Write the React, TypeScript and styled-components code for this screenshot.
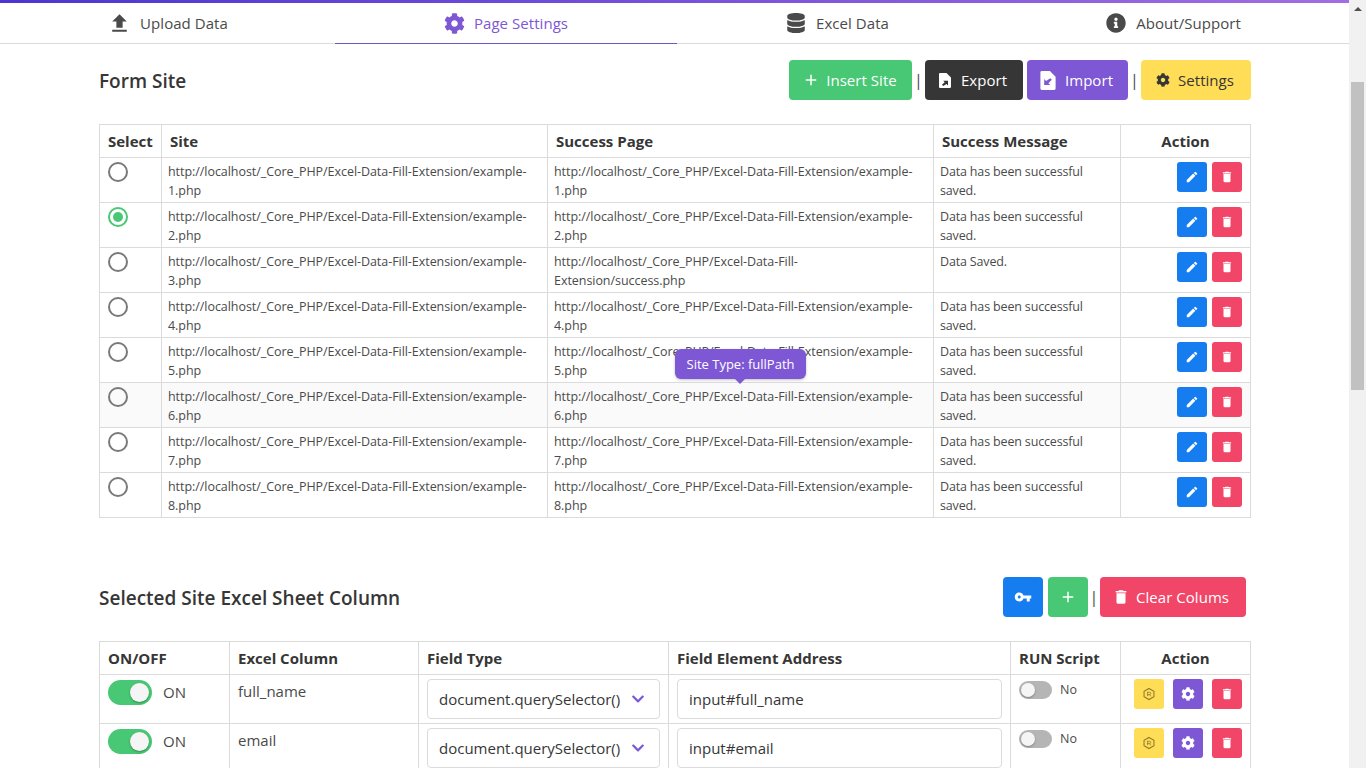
import React from "react";
import styled, { createGlobalStyle } from "styled-components";
import { FaCog, FaDatabase, FaInfoCircle, FaChevronDown } from "react-icons/fa";
import { MdFileUpload, MdEdit, MdDelete, MdAdd, MdVpnKey } from "react-icons/md";

const Global = createGlobalStyle`
  html, body { margin: 0; padding: 0; height: 768px; overflow: hidden; background: #fff; }
  body { font-family: "Open Sans", "Noto Sans", sans-serif; color: #363636; }
  * { box-sizing: border-box; }
`;
const Shell = styled.div`display: flex; width: 1366px; height: 768px; overflow: hidden;`;
const Page = styled.div`width: 1349px; height: 768px; overflow: hidden; flex: none;`;
const Accent = styled.div`height: 3px; background: linear-gradient(90deg, #4c35d2, #a26de2);`;
const Tabs = styled.nav`display: grid; grid-template-columns: 335px 342px 321px 351px; height: 41px; border-bottom: 1px solid #dbdbdb;`;
const Tab = styled.div<{ $active?: boolean; $gap?: number; $icon?: number }>`
  display: flex; align-items: center; justify-content: center; gap: ${p => p.$gap ?? 10}px; height: 41px;
  font-size: 15px; letter-spacing: .05px;
  color: ${p => (p.$active ? "#7e57d5" : "#4a4a4a")};
  border-bottom: 1px solid ${p => (p.$active ? "#6b55c9" : "#dbdbdb")};
  svg { width: ${p => p.$icon ?? 20}px; height: ${p => p.$icon ?? 20}px; flex: none; }
`;
const Content = styled.main`padding: 16px 98px 0 99px;`;
const HeadRow = styled.div<{ $pad?: string }>`display: flex; align-items: center; justify-content: space-between; height: 40px; padding-right: ${p => p.$pad || "0"};`;
const Title = styled.h2`margin: 1px 0 0; font-size: 19px; font-weight: 600; color: #363636;`;
const Actions = styled.div`display: flex; align-items: center; gap: 4px;`;
const IconPair = styled.div`display: flex; gap: 5px;`;
const Sep = styled.span<{ $w?: number }>`display: flex; justify-content: center; width: ${p => p.$w ?? 5}px; font-size: 16px; color: #4a4a4a;`;
const Btn = styled.button<{ $bg: string; $fg?: string; $w: number; $gap?: number; $pr?: number }>`
  display: flex; align-items: center; justify-content: center; gap: ${p => p.$gap ?? 10}px; height: 40px; width: ${p => p.$w}px;
  border: 0; border-radius: 4px; background: ${p => p.$bg}; color: ${p => p.$fg || "#fff"};
  font: 15px "Open Sans", sans-serif; letter-spacing: .05px; padding: 0 ${p => p.$pr ?? 2}px 0 0;
`;
const Table = styled.table`width: 1151px; border-collapse: collapse; table-layout: fixed;`;
const Th = styled.th<{ $center?: boolean; $w: number }>`
  width: ${p => p.$w}px; height: 33px; padding: 0 8px; border: 1px solid #dbdbdb; font-size: 15px; font-weight: 700; color: #363636;
  text-align: ${p => (p.$center ? "center" : "left")};
`;
const Row = styled.tr<{ $hover?: boolean }>`background: ${p => (p.$hover ? "#fafafa" : "#fff")};`;
const Td = styled.td`
  height: 45px; padding: 4px 6px 0; border: 1px solid #dbdbdb; font-size: 12.5px; line-height: 19px; vertical-align: top; color: #4a4a4a; white-space: pre; letter-spacing: -.05px;
`;
const MsgTd = styled(Td)`letter-spacing: -.16px;`;
const Radio = styled.span<{ $on?: boolean }>`
  display: block; width: 20px; height: 20px; margin: 0 0 0 2px; border-radius: 50%; border: 2px solid ${p => (p.$on ? "#48c774" : "#7a7a7a")}; position: relative;
  &::after { content: ""; display: ${p => (p.$on ? "block" : "none")}; position: absolute; inset: 3px; border-radius: 50%; background: #48c774; }
`;
const Tools = styled.div<{ $gap: number; $right?: number }>`display: flex; justify-content: flex-end; gap: ${p => p.$gap}px; padding: 0 ${p => p.$right ?? 3}px 0 0;`;
const Mini = styled.button<{ $bg: string; $fg?: string }>`
  width: 30px; height: 30px; border: 0; border-radius: 3px; padding: 0; background: ${p => p.$bg}; color: ${p => p.$fg || "#fff"};
  display: flex; align-items: center; justify-content: center;
  svg { width: 14px; height: 14px; }
`;
const Tip = styled.div`
  position: absolute; left: 675px; top: 349px; width: 131px; height: 30px; border-radius: 6px; background: #7e57d5; color: #fff;
  font-size: 13px; display: flex; align-items: center; justify-content: center; box-shadow: 0 1px 3px rgba(0,0,0,.25); z-index: 2;
  &::after { content: ""; position: absolute; left: 60px; bottom: -5px; border: 5px solid transparent; border-bottom: 0; border-top-color: #7e57d5; }
`;
const Section = styled.section`margin-top: 59px;`;
const Gap = styled.div`height: 24px;`;
const Td2 = styled(Td)`height: 49px; padding: 4px 8px 0; font-size: 15px; line-height: 24px; color: #4a4a4a; letter-spacing: 0;`;
const SwitchWrap = styled.div<{ $small?: boolean }>`display: flex; align-items: flex-start; gap: ${p => (p.$small ? "8px" : "11px")}; font-size: ${p => (p.$small ? "12.5px" : "15px")}; line-height: ${p => (p.$small ? "22px" : "26px")};`;
const Toggle = styled.span<{ $on?: boolean; $small?: boolean }>`
  display: block; flex: none; margin-top: ${p => (p.$small ? "2px" : "1px")}; width: ${p => (p.$small ? "33px" : "44px")}; height: ${p => (p.$small ? "18px" : "25px")}; border-radius: 13px;
  background: ${p => (p.$on ? "#48c774" : "#b5b5b5")}; position: relative;
  &::after { content: ""; position: absolute; top: ${p => (p.$small ? "2px" : "3px")}; ${p => (p.$on ? "right: 3px" : "left: 2px")};
    width: ${p => (p.$small ? "14px" : "19px")}; height: ${p => (p.$small ? "14px" : "19px")}; border-radius: 50%; background: #f5f5f5; box-shadow: 0 1px 2px rgba(0,0,0,.3); }
`;
const Select = styled.div`
  display: flex; align-items: center; justify-content: space-between; height: 40px; padding: 0 14px 0 11px; border: 1px solid #dbdbdb; border-radius: 4px; color: #363636; font-size: 15px;
  svg { color: #7e57d5; width: 14px; height: 14px; }
`;
const Input = styled.div`height: 40px; padding: 0 11px; border: 1px solid #dbdbdb; border-radius: 4px; display: flex; align-items: center; font-size: 15px; color: #363636;`;
const ScrollBar = styled.aside`width: 17px; height: 768px; flex: none; background: #f1f1f1; display: flex; flex-direction: column; align-items: center;`;
const Arrow = styled.div`margin-top: 7px; border: 4px solid transparent; border-top: 0; border-bottom: 4px solid #505050;`;
const Thumb = styled.div`width: 13px; height: 308px; margin-top: 71px; background: #c1c1c1;`;

function FileIcon({ w, h, bg, dir }: { w: number; h: number; bg: string; dir: "out" | "in" }) {
  return (
    <svg width={w} height={h} viewBox="0 0 16 20" style={{ flex: "none" }}>
      <path fill="#fff" d="M0 1.5A1.5 1.5 0 0 1 1.5 0H10l6 6v12.5a1.5 1.5 0 0 1-1.5 1.5h-13A1.5 1.5 0 0 1 0 18.5z" />
      <path
        fill={bg}
        transform={dir === "in" ? "rotate(180 8 12.5)" : undefined}
        d="M5.6 17.4 4 15.8l3.6-3.6-2-2h6.4v6.4l-2-2z"
      />
    </svg>
  );
}

function NodeIcon() {
  return (
    <svg viewBox="0 0 24 24" fill="none" stroke="#8f7a2c" strokeWidth="1.8">
      <path d="M12 2.5 20.5 7.2v9.6L12 21.5l-8.5-4.7V7.2z" />
      <path d="M9.5 8.5v7M9.5 9h3.5a2 2 0 0 1 0 4H9.5M13 13l2 3" strokeWidth="1.4" />
    </svg>
  );
}

const rows = [1, 2, 3, 4, 5, 6, 7, 8];
const base = "http://localhost/_Core_PHP/Excel-Data-Fill-Extension/example-";
const cols = [{ name: "full_name", addr: "input#full_name" }, { name: "email", addr: "input#email" }];

export default function App() {
  return (
    <Shell>
      <Global />
      <Page>
        <Accent />
        <Tabs>
          <Tab $icon={25} $gap={8}><MdFileUpload />Upload Data</Tab>
          <Tab $active $icon={21} $gap={9}><FaCog />Page Settings</Tab>
          <Tab><FaDatabase />Excel Data</Tab>
          <Tab><FaInfoCircle />About/Support</Tab>
        </Tabs>
        <Content>
          <HeadRow>
            <Title>Form Site</Title>
            <Actions>
              <Btn $bg="#48c774" $w={123} $gap={6}><MdAdd size={18} />Insert Site</Btn>
              <Sep>|</Sep>
              <Btn $bg="#363636" $w={98}><FileIcon w={12} h={15} bg="#363636" dir="out" />Export</Btn>
              <Btn $bg="#7e57d5" $w={101} $gap={9}><FileIcon w={16} h={19} bg="#7e57d5" dir="in" />Import</Btn>
              <Sep>|</Sep>
              <Btn $bg="#ffdd57" $fg="#363636" $w={110} $gap={8}><FaCog size={14} />Settings</Btn>
            </Actions>
          </HeadRow>
          <Gap />
          <Table>
            <thead>
              <tr>
                <Th $w={62}>Select</Th><Th $w={386}>Site</Th><Th $w={386}>Success Page</Th><Th $w={187}>Success Message</Th><Th $w={130} $center>Action</Th>
              </tr>
            </thead>
            <tbody>
              {rows.map(n => (
                <Row key={n} $hover={n === 6}>
                  <Td><Radio $on={n === 2} /></Td>
                  <Td>{base + "\n" + n + ".php"}</Td>
                  <Td>{n === 3 ? "http://localhost/_Core_PHP/Excel-Data-Fill-\nExtension/success.php" : base + "\n" + n + ".php"}</Td>
                  <MsgTd>{n === 3 ? "Data Saved." : "Data has been successful\nsaved."}</MsgTd>
                  <Td><Tools $gap={5} $right={2}><Mini $bg="#167df0"><MdEdit /></Mini><Mini $bg="#f14668"><MdDelete /></Mini></Tools></Td>
                </Row>
              ))}
            </tbody>
          </Table>
          <Tip>Site Type: fullPath</Tip>
          <Section>
            <HeadRow $pad="5px">
              <Title>Selected Site Excel Sheet Column</Title>
              <Actions>
                <IconPair>
                  <Btn $bg="#167df0" $w={40} $pr={0}><MdVpnKey size={18} /></Btn>
                  <Btn $bg="#48c774" $w={40} $pr={0}><MdAdd size={18} /></Btn>
                </IconPair>
                <Sep $w={4}>|</Sep>
                <Btn $bg="#f14668" $w={146} $gap={6} $pr={5}><MdDelete size={18} />Clear Colums</Btn>
              </Actions>
            </HeadRow>
            <Gap />
            <Table>
              <thead>
                <tr>
                  <Th $w={130}>ON/OFF</Th><Th $w={189}>Excel Column</Th><Th $w={250}>Field Type</Th><Th $w={342}>Field Element Address</Th><Th $w={110}>RUN Script</Th><Th $w={130} $center>Action</Th>
                </tr>
              </thead>
              <tbody>
                {cols.map(c => (
                  <tr key={c.name}>
                    <Td2><SwitchWrap><Toggle $on />ON</SwitchWrap></Td2>
                    <Td2>{c.name}</Td2>
                    <Td2><Select>document.querySelector()<FaChevronDown /></Select></Td2>
                    <Td2><Input>{c.addr}</Input></Td2>
                    <Td2><SwitchWrap $small><Toggle $small />No</SwitchWrap></Td2>
                    <Td2><Tools $gap={9} $right={0}><Mini $bg="#ffdd57"><NodeIcon /></Mini><Mini $bg="#7e57d5"><FaCog /></Mini><Mini $bg="#f14668"><MdDelete /></Mini></Tools></Td2>
                  </tr>
                ))}
              </tbody>
            </Table>
          </Section>
        </Content>
      </Page>
      <ScrollBar><Arrow /><Thumb /></ScrollBar>
    </Shell>
  );
}
